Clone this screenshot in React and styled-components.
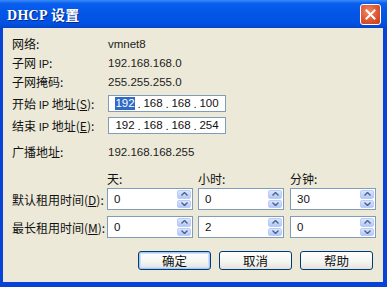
import React from 'react'
import styled, { createGlobalStyle } from 'styled-components'

const GlobalStyle = createGlobalStyle`
  html, body {
    margin: 0;
    padding: 0;
    background: #fff;
  }
  body {
    font-family: "Liberation Sans", "Noto Sans CJK SC", sans-serif;
    font-size: 12px;
    color: #000;
  }
`

const Window = styled.div`
  width: 387px;
  height: 287px;
  display: flex;
  flex-direction: column;
  background: #0842d6;
  overflow: hidden;
`

const TitleBar = styled.div`
  height: 28px;
  flex: none;
  display: flex;
  align-items: center;
  justify-content: space-between;
  padding: 0 6px 0 7px;
  background: linear-gradient(
    to bottom,
    #3c8cf7 0%,
    #0a5fef 12%,
    #0356e6 45%,
    #0252e2 85%,
    #0443c9 100%
  );
`

const Title = styled.div`
  color: #fff;
  font-family: "Liberation Serif", "Noto Sans CJK SC", serif;
  font-weight: bold;
  font-size: 14px;
  letter-spacing: 0.3px;
  text-shadow: 1px 1px 0 #0a2a8a;
  padding-bottom: 1px;
`

const CloseButton = styled.div`
  width: 19px;
  height: 19px;
  margin-top: 1px;
  border: 1px solid #fff;
  border-radius: 3px;
  background: radial-gradient(circle at 40% 35%, #f08a66 0%, #de5530 55%, #c23d18 100%);
  display: flex;
  align-items: center;
  justify-content: center;
`

const Client = styled.div`
  flex: 1;
  margin: 0 4px 5px 3px;
  background: #ece9d8;
  padding: 6px 0 0 9px;
  display: flex;
  flex-direction: column;
`

const Row = styled.div`
  display: flex;
  align-items: center;
  height: ${p => p.$h || 19}px;
  margin-top: ${p => p.$mt || 0}px;
`

const Label = styled.div`
  width: 95px;
  flex: none;
  font-family: "Noto Sans CJK SC", sans-serif;
  font-size: 12px;
  white-space: nowrap;
  color: #111;
  .latin {
    font-family: "Liberation Sans", sans-serif;
    font-size: 11px;
  }
`

const Value = styled.div`
  padding-left: 1px;
  font-family: "Liberation Sans", sans-serif;
  font-size: 11.5px;
  color: #222;
`

const IpBox = styled.div`
  width: 118px;
  height: 17px;
  box-sizing: border-box;
  border: 1px solid #7f9db9;
  background: #fff;
  display: flex;
  align-items: center;
  padding-left: 6px;
  font-family: "Liberation Sans", sans-serif;
  font-size: 11.5px;
  color: #111;
  margin-left: 1px;
`

const Seg = styled.span`
  width: 20px;
  text-align: center;
  line-height: 13px;
  background: ${p => (p.$sel ? '#316ac5' : 'transparent')};
  color: ${p => (p.$sel ? '#fff' : '#111')};
`

const Dot = styled.span`
  width: 8px;
  text-align: center;
`

const ColHead = styled.div`
  width: 86px;
  flex: none;
  margin-right: ${p => p.$gap || 0}px;
  font-family: "Noto Sans CJK SC", sans-serif;
  font-size: 12px;
  color: #111;
`

const SpinBox = styled.div`
  width: 86px;
  height: 22px;
  flex: none;
  box-sizing: border-box;
  margin-right: ${p => p.$gap || 0}px;
  border: 1px solid #7f9db9;
  background: #fff;
  display: flex;
  align-items: center;
  padding: 0 1px 0 6px;
  font-family: "Liberation Sans", sans-serif;
  font-size: 11.5px;
  color: #111;
`

const SpinText = styled.div`
  flex: 1;
`

const SpinButtons = styled.div`
  width: 14px;
  height: 18px;
  display: flex;
  flex-direction: column;
  gap: 1px;
`

const SpinHalf = styled.div`
  flex: 1;
  border-radius: 2px;
  background: linear-gradient(to bottom, #dbe6fd 0%, #c1d3fb 60%, #b4c8f6 100%);
  border: 1px solid #b9cdf7;
  display: flex;
  align-items: center;
  justify-content: center;
`

const ButtonRow = styled.div`
  display: flex;
  justify-content: flex-end;
  gap: 8px;
  padding-right: 10px;
  margin-top: 13px;
`

const Button = styled.div`
  width: 71px;
  height: 17px;
  border: 1px solid #003c74;
  border-radius: 3px;
  background: linear-gradient(to bottom, #ffffff 0%, #f4f4f0 60%, #e3e2da 100%);
  display: flex;
  align-items: center;
  justify-content: center;
  font-family: "Noto Sans CJK SC", sans-serif;
  font-size: 12.5px;
  color: #111;
  box-shadow: ${p => (p.$default ? 'inset 0 0 0 1px #a8c6f5, inset 0 0 0 2px #cfdefa' : 'none')};
`

const Arrow = ({ up }) => (
  <svg width="7" height="4" viewBox="0 0 7 4">
    <path
      d={up ? 'M0.5 3.5 L3.5 0.5 L6.5 3.5' : 'M0.5 0.5 L3.5 3.5 L6.5 0.5'}
      fill="none"
      stroke="#4d6185"
      strokeWidth="1.4"
    />
  </svg>
)

const Spin = ({ value, gap }) => (
  <SpinBox $gap={gap}>
    <SpinText>{value}</SpinText>
    <SpinButtons>
      <SpinHalf><Arrow up /></SpinHalf>
      <SpinHalf><Arrow /></SpinHalf>
    </SpinButtons>
  </SpinBox>
)

const Ip = ({ parts, selected }) => (
  <IpBox>
    {parts.map((p, i) => (
      <React.Fragment key={i}>
        {i > 0 && <Dot>.</Dot>}
        <Seg $sel={selected && i === 0}>{p}</Seg>
      </React.Fragment>
    ))}
  </IpBox>
)

export default function App() {
  return (
    <>
      <GlobalStyle />
      <Window>
        <TitleBar>
          <Title>DHCP 设置</Title>
          <CloseButton>
            <svg width="11" height="11" viewBox="0 0 11 11">
              <path d="M1.5 1.5 L9.5 9.5 M9.5 1.5 L1.5 9.5" stroke="#fff" strokeWidth="2" strokeLinecap="square" />
            </svg>
          </CloseButton>
        </TitleBar>
        <Client>
          <Row>
            <Label>网络:</Label>
            <Value>vmnet8</Value>
          </Row>
          <Row>
            <Label>子网 <span className="latin">IP</span>:</Label>
            <Value>192.168.168.0</Value>
          </Row>
          <Row>
            <Label>子网掩码:</Label>
            <Value>255.255.255.0</Value>
          </Row>
          <Row $h={21} $mt={2}>
            <Label>开始 <span className="latin">IP</span> 地址(<u>S</u>):</Label>
            <Ip parts={['192', '168', '168', '100']} selected />
          </Row>
          <Row $h={21} $mt={1}>
            <Label>结束 <span className="latin">IP</span> 地址(<u>E</u>):</Label>
            <Ip parts={['192', '168', '168', '254']} />
          </Row>
          <Row $mt={6}>
            <Label>广播地址:</Label>
            <Value>192.168.168.255</Value>
          </Row>
          <Row $mt={8}>
            <Label />
            <ColHead $gap={5}>天:</ColHead>
            <ColHead $gap={6}>小时:</ColHead>
            <ColHead>分钟:</ColHead>
          </Row>
          <Row $h={22}>
            <Label>默认租用时间(<u>D</u>):</Label>
            <Spin value="0" gap={5} />
            <Spin value="0" gap={6} />
            <Spin value="30" />
          </Row>
          <Row $h={22} $mt={6}>
            <Label>最长租用时间(<u>M</u>):</Label>
            <Spin value="0" gap={5} />
            <Spin value="2" gap={6} />
            <Spin value="0" />
          </Row>
          <ButtonRow>
            <Button $default>确定</Button>
            <Button>取消</Button>
            <Button>帮助</Button>
          </ButtonRow>
        </Client>
      </Window>
    </>
  )
}
